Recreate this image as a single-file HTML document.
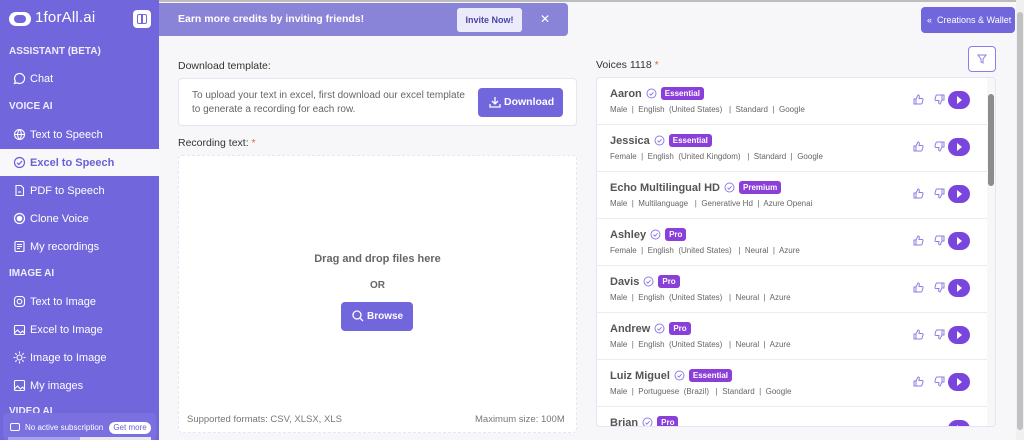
<!DOCTYPE html>
<html><head><meta charset="utf-8"><style>
*{box-sizing:border-box;margin:0;padding:0}
body{width:1024px;height:440px;overflow:hidden;background:#f7f7f9;font-family:"Liberation Sans",sans-serif;position:relative;color:#333}
.a{position:absolute}
#sb{left:0;top:0;width:159px;height:440px;background:#7166dc;color:#fff}
.hd{position:absolute;left:9px;font-size:10px;font-weight:bold;color:#f0eefc}
.it{position:absolute;left:0;width:159px;height:27px;font-size:11px;color:#fff;display:flex;align-items:center;padding-left:30px}
.it svg{position:absolute;left:13px;top:7px}
.it.on{background:#f8f8fb;color:#6a5fd6;font-weight:bold}
.row{position:absolute;left:0;width:390px;height:47px;border-bottom:1px solid #eceaf3}
.nm{position:absolute;left:13px;top:9px;font-size:11px;font-weight:bold;color:#555;display:flex;align-items:center;gap:4px}
.bd{background:#8a3fd8;color:#fff;font-size:8px;font-weight:bold;padding:2px 4px;border-radius:3px}
.mt{position:absolute;left:13px;top:27px;font-size:8px;color:#666;white-space:pre}
.pl{position:absolute;left:351px;top:13px;width:22px;height:18px;border-radius:9px;background:#7a45dd}
.pl:after{content:"";position:absolute;left:9px;top:5px;border-left:5px solid #fff;border-top:4px solid transparent;border-bottom:4px solid transparent}
.tu,.td{position:absolute;top:16px}
.tu{left:316px}.td{left:337px}
</style></head><body>
<svg width="0" height="0" style="position:absolute"><defs>
<symbol id="ck" viewBox="0 0 11 11"><circle cx="5.5" cy="5.5" r="4.5" fill="none" stroke="#8a7fe6" stroke-width="1"/><path d="M3.5 5.7l1.4 1.4 2.7-2.8" fill="none" stroke="#8a7fe6" stroke-width="1"/></symbol>
<symbol id="up" viewBox="0 0 11 11"><path d="M1 5h2v5H1zM3 5l2-4c1 0 1.5.7 1.3 1.8L6 4.5h3c.8 0 1.2.6 1 1.3l-1 3.5c-.2.5-.6.7-1 .7H3" fill="none" stroke="#8a7fe6" stroke-width="1"/></symbol>
<symbol id="dn" viewBox="0 0 11 11"><g transform="rotate(180 5.5 5.5)"><path d="M1 5h2v5H1zM3 5l2-4c1 0 1.5.7 1.3 1.8L6 4.5h3c.8 0 1.2.6 1 1.3l-1 3.5c-.2.5-.6.7-1 .7H3" fill="none" stroke="#8a7fe6" stroke-width="1"/></g></symbol>
</defs></svg>
<div class="a" style="left:0;top:0;width:1024px;height:2px;background:#bdbdbd"></div>
<div id="sb" class="a">
 <div class="a" style="left:9px;top:12px;width:22px;height:14px;border-radius:7px;background:#fff"></div>
 <div class="a" style="left:14px;top:15px;width:12px;height:8px;border-radius:4px;background:#7166dc"></div>
 <div class="a" style="left:35px;top:9px;font-size:15px;color:#fff;letter-spacing:0.2px">1forAll.ai</div>
 <div class="a" style="left:133px;top:10px;width:18px;height:18px;border-radius:4px;background:#fff"></div>
 <div class="a" style="left:137px;top:14px;width:10px;height:10px;border:1.5px solid #7166dc;border-radius:2px"></div>
 <div class="a" style="left:141px;top:14px;width:1.5px;height:10px;background:#7166dc"></div>
 <div class="hd" style="top:46px">ASSISTANT (BETA)</div>
 <div class="it" style="top:65px"><svg width="13" height="13" viewBox="0 0 13 13" fill="none" stroke="#fff" stroke-width="1.2"><path d="M6.5 1.5a5 5 0 1 1-2.5 9.3L1.5 11.5l.8-2.4A5 5 0 0 1 6.5 1.5z"/></svg>Chat</div>
 <div class="hd" style="top:101px">VOICE AI</div>
 <div class="it" style="top:121px"><svg width="13" height="13" viewBox="0 0 13 13" fill="none" stroke="#fff" stroke-width="1.1"><circle cx="6.5" cy="6.5" r="5"/><path d="M1.5 6.5h10M6.5 1.5c-2.5 3-2.5 7 0 10M6.5 1.5c2.5 3 2.5 7 0 10"/></svg>Text to Speech</div>
 <div class="it on" style="top:149px"><svg width="13" height="13" viewBox="0 0 13 13" fill="none" stroke="#6a5fd6" stroke-width="1.2"><circle cx="6.5" cy="6.5" r="5"/><path d="M4 6.7l1.8 1.8L9 5"/></svg>Excel to Speech</div>
 <div class="it" style="top:177px"><svg width="13" height="13" viewBox="0 0 13 13" fill="none" stroke="#fff" stroke-width="1.1"><path d="M3 1.5h5l2.5 2.5v7.5H3z"/><path d="M5 8h3"/></svg>PDF to Speech</div>
 <div class="it" style="top:205px"><svg width="13" height="13" viewBox="0 0 13 13"><circle cx="6.5" cy="6.5" r="5" fill="none" stroke="#fff" stroke-width="1.2"/><circle cx="6.5" cy="6.5" r="2.8" fill="#fff"/></svg>Clone Voice</div>
 <div class="it" style="top:233px"><svg width="13" height="13" viewBox="0 0 13 13" fill="none" stroke="#fff" stroke-width="1.1"><rect x="2" y="1.5" width="9" height="10" rx="1"/><path d="M4 4.5h5M4 6.5h5M4 8.5h3"/></svg>My recordings</div>
 <div class="hd" style="top:268px">IMAGE AI</div>
 <div class="it" style="top:288px"><svg width="13" height="13" viewBox="0 0 13 13" fill="none" stroke="#fff" stroke-width="1.1"><rect x="1.5" y="1.5" width="10" height="10" rx="3"/><circle cx="6.5" cy="6.5" r="2.3"/></svg>Text to Image</div>
 <div class="it" style="top:316px"><svg width="13" height="13" viewBox="0 0 13 13" fill="none" stroke="#fff" stroke-width="1.1"><rect x="1.5" y="2.5" width="10" height="9" rx="1"/><path d="M1.5 10l3-3 3 3 2-2 2 2"/></svg>Excel to Image</div>
 <div class="it" style="top:344px"><svg width="13" height="13" viewBox="0 0 13 13" fill="none" stroke="#fff" stroke-width="1.1"><circle cx="6.5" cy="6.5" r="2.5"/><path d="M6.5 .5v2M6.5 10.5v2M.5 6.5h2M10.5 6.5h2M2.3 2.3l1.4 1.4M9.3 9.3l1.4 1.4M2.3 10.7l1.4-1.4M9.3 3.7l1.4-1.4"/></svg>Image to Image</div>
 <div class="it" style="top:372px"><svg width="13" height="13" viewBox="0 0 13 13" fill="none" stroke="#fff" stroke-width="1.1"><rect x="1.5" y="1.5" width="10" height="10" rx="1"/><path d="M1.5 10l3-3 3 3 2-2 2 2"/></svg>My images</div>
 <div class="hd" style="top:406px">VIDEO AI</div>
 <div class="a" style="left:3px;top:413px;width:153px;height:27px;background:#7b70e0;border-radius:4px"></div>
 <div class="a" style="left:10px;top:423px;width:10px;height:8px;border:1.2px solid #fff;border-radius:2px"></div>
 <div class="a" style="left:25px;top:423px;font-size:8px;color:#fff">No active subscription</div>
 <div class="a" style="left:109px;top:422px;width:42px;height:12px;background:#fff;border-radius:6px;font-size:8px;color:#6a5fd6;text-align:center;line-height:12px">Get more</div>
 <div class="a" style="left:8px;top:437px;width:143px;height:3px;background:#e8e8ee"></div>
 <div class="a" style="left:8px;top:437px;width:72px;height:3px;background:#a9a2ee"></div>
</div>
<div class="a" style="left:159px;top:3px;width:409px;height:33px;background:#8a84d8;border-radius:0 4px 4px 0"></div>
<div class="a" style="left:178px;top:13px;font-size:10.5px;font-weight:bold;color:#fff">Earn more credits by inviting friends!</div>
<div class="a" style="left:457px;top:8px;width:65px;height:24px;background:#ecebfb;border-radius:3px;font-size:9px;font-weight:bold;color:#4b44a8;text-align:center;line-height:24px">Invite Now!</div>
<div class="a" style="left:540px;top:12px;font-size:12px;color:#fff">✕</div>
<div class="a" style="left:921px;top:7px;width:94px;height:26px;background:#7166dc;border-radius:4px;color:#fff;font-size:9px;line-height:26px;padding-left:6px;white-space:nowrap">«&nbsp; Creations &amp; Wallet</div>
<div class="a" style="left:1016px;top:0;width:8px;height:440px;background:#f0f0f0"></div>
<div class="a" style="left:1017px;top:12px;width:6px;height:418px;background:#c1c1c1;border-radius:3px"></div>

<div class="a" style="left:178px;top:60px;font-size:10.5px;color:#333">Download template:</div>
<div class="a" style="left:178px;top:78px;width:399px;height:48px;background:#fff;border:1px solid #e6e4f5;border-radius:4px"></div>
<div class="a" style="left:192px;top:89px;font-size:10px;color:#666;line-height:14px">To upload your text in excel, first download our excel template<br>to generate a recording for each row.</div>
<div class="a" style="left:478px;top:88px;width:85px;height:29px;background:#7166dc;border-radius:4px;color:#fff;font-size:10.5px;font-weight:bold;line-height:29px;padding-left:26px">Download</div>
<svg class="a" style="left:489px;top:96px" width="12" height="12" viewBox="0 0 12 12" fill="none" stroke="#fff" stroke-width="1.3"><path d="M6 1v7M3 5l3 3 3-3M1 8v3h10V8"/></svg>
<div class="a" style="left:178px;top:137px;font-size:10.5px;color:#333">Recording text: <span style="color:#e06040">*</span></div>
<div class="a" style="left:178px;top:155px;width:399px;height:278px;background:#fff;border:1px dashed #e6e4f5;border-radius:4px"></div>
<div class="a" style="left:178px;top:253px;width:399px;text-align:center;font-size:11px;font-weight:bold;color:#666">Drag and drop files here</div>
<div class="a" style="left:178px;top:280px;width:399px;text-align:center;font-size:10px;font-weight:bold;color:#666">OR</div>
<div class="a" style="left:341px;top:302px;width:72px;height:29px;background:#7166dc;border-radius:4px;color:#fff;font-size:10px;font-weight:bold;line-height:29px;padding-left:26px">Browse</div>
<svg class="a" style="left:352px;top:310px" width="12" height="12" viewBox="0 0 12 12" fill="none" stroke="#fff" stroke-width="1.3"><circle cx="5" cy="5" r="4"/><path d="M8 8l3 3"/></svg>
<div class="a" style="left:187px;top:414px;font-size:9.5px;color:#777">Supported formats: CSV, XLSX, XLS</div>
<div class="a" style="left:475px;top:414px;font-size:9.5px;color:#777">Maximum size: 100M</div>

<div class="a" style="left:596px;top:59px;font-size:10.5px;color:#333">Voices 1118 <span style="color:#e06040">*</span></div>
<div class="a" style="left:968px;top:46px;width:28px;height:26px;border:1px solid #8a7fe6;border-radius:4px;background:#fff"></div>
<svg class="a" style="left:977px;top:54px" width="10" height="10" viewBox="0 0 10 10" fill="none" stroke="#8a7fe6" stroke-width="1"><path d="M1 1h8L6 5v4L4 8V5z"/></svg>
<div class="a" style="left:596px;top:77px;width:400px;height:350px;background:#fff;border:1px solid #e6e4f5;border-radius:4px;overflow:hidden">
 <div class="a" style="left:390px;top:0;width:9px;height:350px;background:#f7f7f7"></div>
 <div class="a" style="left:391px;top:16px;width:6px;height:92px;background:#8c8c8c;border-radius:3px"></div>
 <div class="row" style="top:0"><div class="nm">Aaron <svg width="11" height="11"><use href="#ck"/></svg><span class="bd">Essential</span></div><div class="mt">Male  |  English  (United States)   |  Standard  |  Google</div><svg class="tu" width="11" height="11"><use href="#up"/></svg><svg class="td" width="11" height="11"><use href="#dn"/></svg><div class="pl"></div></div>
 <div class="row" style="top:47px"><div class="nm">Jessica <svg width="11" height="11"><use href="#ck"/></svg><span class="bd">Essential</span></div><div class="mt">Female  |  English  (United Kingdom)   |  Standard  |  Google</div><svg class="tu" width="11" height="11"><use href="#up"/></svg><svg class="td" width="11" height="11"><use href="#dn"/></svg><div class="pl"></div></div>
 <div class="row" style="top:94px"><div class="nm">Echo Multilingual HD <svg width="11" height="11"><use href="#ck"/></svg><span class="bd">Premium</span></div><div class="mt">Male  |  Multilanguage   |  Generative Hd  |  Azure Openai</div><svg class="tu" width="11" height="11"><use href="#up"/></svg><svg class="td" width="11" height="11"><use href="#dn"/></svg><div class="pl"></div></div>
 <div class="row" style="top:141px"><div class="nm">Ashley <svg width="11" height="11"><use href="#ck"/></svg><span class="bd">Pro</span></div><div class="mt">Female  |  English  (United States)   |  Neural  |  Azure</div><svg class="tu" width="11" height="11"><use href="#up"/></svg><svg class="td" width="11" height="11"><use href="#dn"/></svg><div class="pl"></div></div>
 <div class="row" style="top:188px"><div class="nm">Davis <svg width="11" height="11"><use href="#ck"/></svg><span class="bd">Pro</span></div><div class="mt">Male  |  English  (United States)   |  Neural  |  Azure</div><svg class="tu" width="11" height="11"><use href="#up"/></svg><svg class="td" width="11" height="11"><use href="#dn"/></svg><div class="pl"></div></div>
 <div class="row" style="top:235px"><div class="nm">Andrew <svg width="11" height="11"><use href="#ck"/></svg><span class="bd">Pro</span></div><div class="mt">Male  |  English  (United States)   |  Neural  |  Azure</div><svg class="tu" width="11" height="11"><use href="#up"/></svg><svg class="td" width="11" height="11"><use href="#dn"/></svg><div class="pl"></div></div>
 <div class="row" style="top:282px"><div class="nm">Luiz Miguel <svg width="11" height="11"><use href="#ck"/></svg><span class="bd">Essential</span></div><div class="mt">Male  |  Portuguese  (Brazil)   |  Standard  |  Google</div><svg class="tu" width="11" height="11"><use href="#up"/></svg><svg class="td" width="11" height="11"><use href="#dn"/></svg><div class="pl"></div></div>
 <div class="row" style="top:329px"><div class="nm">Brian <svg width="11" height="11"><use href="#ck"/></svg><span class="bd">Pro</span></div><div class="pl"></div></div>
</div>
</body></html>
